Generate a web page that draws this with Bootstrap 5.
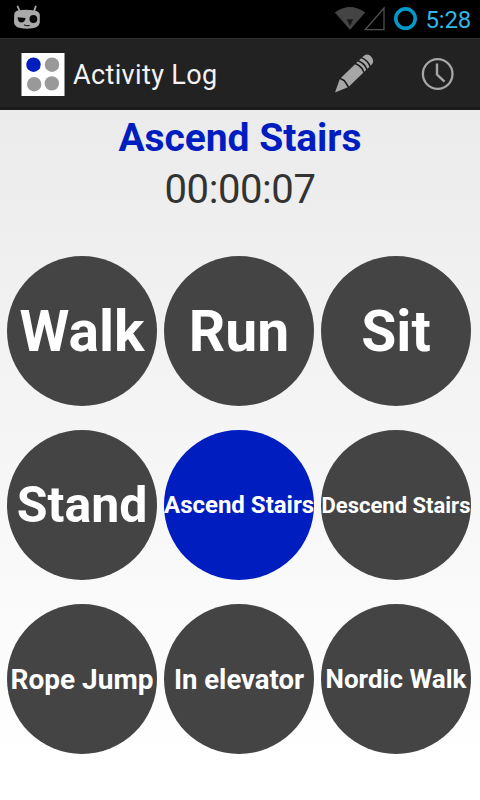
<!DOCTYPE html>
<html lang="en">
<head>
<meta charset="utf-8">
<meta name="viewport" content="width=device-width, initial-scale=1">
<title>Activity Log</title>
<link href="https://cdn.jsdelivr.net/npm/bootstrap@5.3.0/dist/css/bootstrap.min.css" rel="stylesheet">
<style>
  body { font-family: Roboto, "Liberation Sans", sans-serif; width: 480px; height: 800px; overflow: hidden; background: #fff; line-height: 1; }
  svg { display: block; flex: none; }
  .status-strip { height: 38px; background: #000; padding: 0 9px 0 12px; }
  .clock-text { color: #33b5e5; font-size: 24px; letter-spacing: -.2px; margin-left: 8px; padding-top: 2px; }
  .action-strip { height: 72px; background: #222; border-top: 1px solid #303030; border-bottom: 3px solid #1a1a1a; padding: 2px 25px 0 21px; }
  .app-title { color: #f3f3f3; font-size: 27px; letter-spacing: .36px; margin-left: 8px; padding-top: 2px; font-weight: 400; }
  .history-icon { margin-left: 46px; }
  .screen { height: 690px; background: linear-gradient(#ebebeb, #fff 95%); }
  .current { color: #001ec0; font-size: 39px; letter-spacing: -.05px; font-weight: 700; line-height: 46px; padding-top: 5px; }
  .timer { color: #333; font-size: 40px; letter-spacing: -.4px; line-height: 46px; padding-top: 6px; }
  .activities { display: grid; grid-template-columns: repeat(3, 150px); gap: 24px 7px; padding: 43px 0 0 7px; }
  .activity { width: 150px; height: 150px; border: 0; padding: 0; background: #444; color: #fff; font-weight: 700; white-space: nowrap; line-height: 1; }
  .activity.is-on { background: #001ec0; }
  .s57 { font-size: 57px; } .s50 { font-size: 50px; } .s28 { font-size: 28px; padding-top: 2px; } .s27 { font-size: 27.5px; padding-top: 2px; }
  .s26 { font-size: 26px; } .s24 { font-size: 24px; } .s22 { font-size: 22px; padding-top: 2px; }
</style>
</head>
<body class="m-0">
<header>
  <div class="status-strip d-flex align-items-center">
    <svg width="30" height="38" viewBox="0 0 30 38">
      <path d="M5.700 6.500L8 12M23.700 6.500L21.800 12" stroke="#aaa" stroke-width="1.800" stroke-linecap="round"/>
      <path d="M2.200 15Q2.300 11.200 6 10.500Q14 8.900 22 10.500Q27.600 11.200 27.800 15V22.500Q27.500 28.700 14.800 28.800Q2.300 28.700 2 22.500Z" fill="#aaa"/>
      <path d="M5.500 17.200L13.500 18Q13 22.300 9.300 22.500Q5.700 22.300 5.500 17.200Z" fill="#0a0a0a"/>
      <circle cx="21.400" cy="19" r="3.900" fill="#0a0a0a"/>
      <path d="M12 24.700Q14 26.200 17.700 25.500" stroke="#222" stroke-width="1.200" fill="none"/>
    </svg>
    <svg class="ms-auto" width="84" height="38" viewBox="334 0 84 38">
      <path d="M334.800 12.500Q350 1.500 365.200 12.500L350 29.800Z" fill="#444"/>
      <path d="M346.800 19.200H353.200L350 26Z" fill="#161616"/>
      <path d="M365.200 29.700L384 8V29.700Z" fill="none" stroke="#505050" stroke-width="1.300"/>
      <circle cx="405.500" cy="18.600" r="9.700" fill="none" stroke="#0099cc" stroke-width="3.600"/>
    </svg>
    <span class="clock-text">5:28</span>
  </div>
  <nav class="action-strip d-flex align-items-center">
    <svg width="44" height="43" viewBox="-.5 0 44 43">
      <path fill="#fff" d="M0 0h43v43H0z"/>
      <circle cx="12" cy="11.700" r="7.200" fill="#001ec0"/>
      <circle cx="30.500" cy="11.700" r="7.200" fill="#999"/>
      <circle cx="12.700" cy="31.200" r="7.200" fill="#999"/>
      <circle cx="30.300" cy="30.400" r="7.200" fill="#999"/>
    </svg>
    <h1 class="app-title mb-0">Activity Log</h1>
    <svg class="ms-auto" width="44" height="42" viewBox="331 53 44 42">
      <path d="M335 92.500L339.800 79L363 56.500Q367.500 52.500 371.500 57Q375 61.500 371.300 65L348.500 87Z" fill="#a6a6a6"/>
      <path d="M339.500 78.200Q342.500 79.800 344.200 80.500Q346 83 348.700 87.500M355.200 63.500Q362 66.200 364 72.600M358.200 60.700Q365 63.400 367 69.800M361.300 57.600Q368 60.300 370.300 66.900" fill="none" stroke="#1a1a1a" stroke-width="1.500"/>
    </svg>
    <svg class="history-icon" width="34" height="34" viewBox="421 57 34 34" fill="none" stroke="#a6a6a6">
      <circle cx="437.700" cy="74" r="14.800" stroke-width="2.300"/>
      <path d="M437 63.500V74.500L444.500 81.700" stroke-width="2.400"/>
    </svg>
  </nav>
</header>
<main class="screen text-center">
  <div class="current">Ascend Stairs</div>
  <div class="timer">00:00:07</div>
  <div class="activities">
    <button class="activity rounded-circle s57">Walk</button>
    <button class="activity rounded-circle s57">Run</button>
    <button class="activity rounded-circle s57">Sit</button>
    <button class="activity rounded-circle s50">Stand</button>
    <button class="activity rounded-circle s24 is-on">Ascend Stairs</button>
    <button class="activity rounded-circle s22">Descend Stairs</button>
    <button class="activity rounded-circle s28">Rope Jump</button>
    <button class="activity rounded-circle s27">In elevator</button>
    <button class="activity rounded-circle s26">Nordic Walk</button>
  </div>
</main>
<script src="https://cdn.jsdelivr.net/npm/bootstrap@5.3.0/dist/js/bootstrap.bundle.min.js"></script>
</body>
</html>
